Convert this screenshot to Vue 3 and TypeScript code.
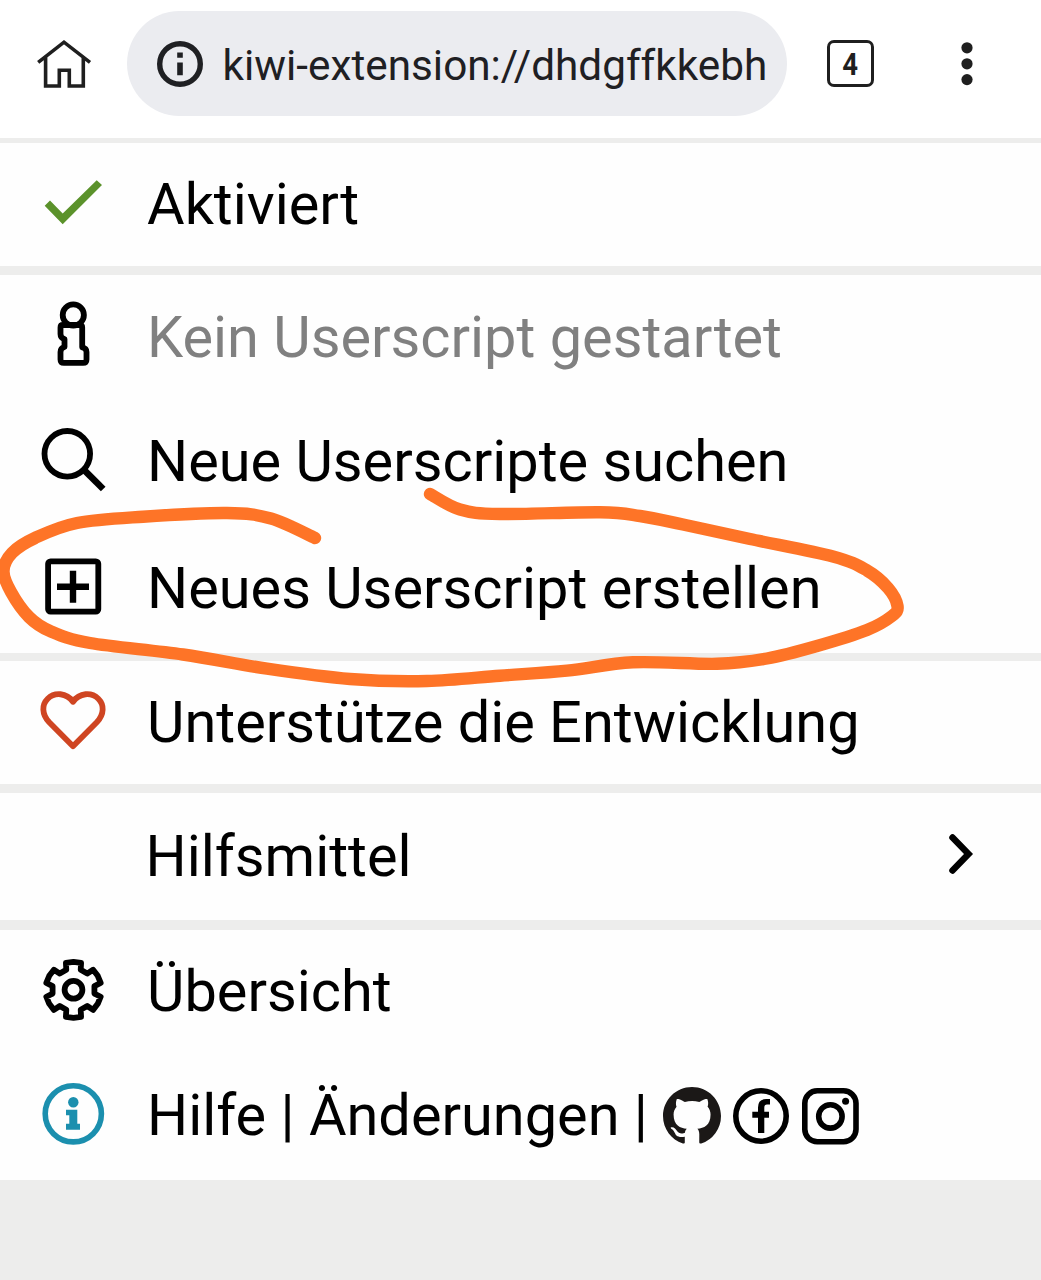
<script setup lang="ts">
type Point = [number, number]

// Freehand marker line, as sampled points in page coordinates
const marker: Point[] = [
  [315, 538], [271, 518.5], [227, 513], [143, 516.7], [77, 523], [35, 538], [12, 553],
  [3.5, 571], [11, 592], [29, 617], [50, 631], [90, 643], [183, 654.5], [267, 668.7],
  [350, 679], [427, 681], [500, 675.7], [567, 670.7], [633, 662.3], [717, 663.8],
  [767, 658.5], [817, 646], [867, 630], [892, 616], [897.5, 606], [888, 588], [867, 570.5],
  [833, 556.5], [750, 539], [683, 524.5], [640, 516], [600, 512.3], [500, 514],
  [460, 509.5], [430, 494],
]

function smooth(points: Point[]): string {
  let d = `M${points[0][0]} ${points[0][1]}`
  for (let i = 0; i < points.length - 1; i++) {
    const a = points[Math.max(i - 1, 0)]
    const b = points[i]
    const c = points[i + 1]
    const e = points[Math.min(i + 2, points.length - 1)]
    d += `C${b[0] + (c[0] - a[0]) / 6} ${b[1] + (c[1] - a[1]) / 6} ${c[0] - (e[0] - b[0]) / 6} ${c[1] - (e[1] - b[1]) / 6} ${c[0]} ${c[1]}`
  }
  return d
}

// Six-toothed cog around (cx, cy)
function cog(cx: number, cy: number): string {
  const tooth: Point[] = [[-7.2, -20], [-7.6, -27], [0, -28], [7.6, -27], [7.2, -20]]
  const out: string[] = []
  for (let k = 0; k < 6; k++) {
    const t = (k * Math.PI) / 3
    for (const [x, y] of tooth) {
      const px = cx + x * Math.cos(t) - y * Math.sin(t)
      const py = cy + x * Math.sin(t) + y * Math.cos(t)
      out.push(`${px.toFixed(2)} ${py.toFixed(2)}`)
    }
  }
  return `M${out.join('L')}Z`
}

const markerPath = smooth(marker)
const cogPath = cog(32.5, 31.8)
</script>

<template>
  <div class="screen">
    <header class="toolbar">
      <svg class="home" viewBox="0 0 55 48" width="55" height="48">
        <path d="M1.2 22.3 27 2.2 53 22.3M8.6 17V46H22.3V30.2H32.3V46H46.3V17" />
      </svg>
      <div class="address">
        <svg viewBox="0 0 46 46" width="46" height="46">
          <circle cx="23" cy="23" r="20.3" />
          <path d="M20.2 11.5h5.6v5.2h-5.6zM20.2 21.6h5.6v12.6h-5.6z" />
        </svg>
        <span class="url">kiwi-extension://dhdgffkkebh</span>
      </div>
      <div class="tabs"><span>4</span></div>
      <svg class="more" viewBox="0 0 12 44" width="12" height="44">
        <circle cx="6" cy="5.8" r="5.6" /><circle cx="6" cy="21.8" r="5.6" /><circle cx="6" cy="37.6" r="5.6" />
      </svg>
    </header>

    <section class="group first">
      <div class="row">
        <svg class="icon" viewBox="0 0 64 64">
          <path class="check" d="M9 30.5 21.7 43.6 55.7 10.2 61 15 21.7 54.2 3.7 35.7Z" />
        </svg>
        <span class="label">Aktiviert</span>
      </div>
    </section>

    <section class="group scripts">
      <div class="row">
        <svg class="icon line" viewBox="0 0 64 64">
          <circle cx="32.3" cy="12" r="10.6" />
          <path d="M22 22H38.6Q41.2 22 41.2 24.6V44.3Q45.5 45 45.5 49V56.5Q45.5 59.9 42.1 59.9H22.9Q19.5 59.9 19.5 56.5V49Q19.5 45 23.5 44V36Q19.5 35 19.5 31V24.5Q19.5 22 22 22Z" />
        </svg>
        <span class="label muted">Kein Userscript gestartet</span>
      </div>
      <div class="row search">
        <svg class="icon line" viewBox="0 0 64 64">
          <circle cx="26.3" cy="24.8" r="22.8" />
          <path class="handle" d="M43.5 41.3 62.2 60" />
        </svg>
        <span class="label">Neue Userscripte suchen</span>
      </div>
      <div class="row create">
        <svg class="icon line" viewBox="0 0 64 64">
          <rect x="7.1" y="6.3" width="50.2" height="50.4" rx="2.5" />
          <path class="plus" d="M16 31.8H48M32 15.8V47.8" />
        </svg>
        <span class="label">Neues Userscript erstellen</span>
      </div>
    </section>

    <section class="group donate">
      <div class="row">
        <svg class="icon line heart" viewBox="0 0 64 64">
          <path d="M32 58.2 8.2 34.2C.5 26 .8 16.5 6.7 10.7C13.5 4 25.5 4.5 32 13.8C38.5 4.5 50.5 4 57.3 10.7C63.2 16.5 63.5 26 55.8 34.2Z" />
        </svg>
        <span class="label">Unterstütze die Entwicklung</span>
      </div>
    </section>

    <section class="group tools">
      <div class="row">
        <span class="icon"></span>
        <span class="label">Hilfsmittel</span>
        <svg class="chevron" viewBox="0 0 28 44" width="28" height="44">
          <path d="M5.5 5.5 21.5 22 5.5 38.5" />
        </svg>
      </div>
    </section>

    <section class="group last">
      <div class="row overview">
        <svg class="icon line" viewBox="0 0 64 64">
          <path :d="cogPath" />
          <circle cx="32.5" cy="31.8" r="8.9" />
        </svg>
        <span class="label">Übersicht</span>
      </div>
      <div class="row help">
        <svg class="icon info" viewBox="0 0 64 64">
          <circle class="ring" cx="32.3" cy="30.8" r="28.1" />
          <circle cx="32.3" cy="19.2" r="5.2" />
          <path d="M25 26.8H36.3V40.8H39V46.8H25V40.8H28.3V32.2H25Z" />
        </svg>
        <span class="label">Hilfe | Änderungen |</span>
        <span class="social">
          <svg viewBox="0 0 16 16" width="58" height="58">
            <path fill="#1b1817" d="M8 0C3.58 0 0 3.58 0 8c0 3.54 2.29 6.53 5.47 7.59.4.07.55-.17.55-.38 0-.19-.01-.82-.01-1.49-2.01.37-2.53-.49-2.69-.94-.09-.23-.48-.94-.82-1.13-.28-.15-.68-.52-.01-.53.63-.01 1.08.58 1.23.82.72 1.21 1.87.87 2.33.66.07-.52.28-.87.51-1.07-1.78-.2-3.64-.89-3.64-3.95 0-.87.31-1.59.82-2.15-.08-.2-.36-1.02.08-2.12 0 0 .67-.21 2.2.82.64-.18 1.32-.27 2-.27s1.36.09 2 .27c1.53-1.04 2.2-.82 2.2-.82.44 1.1.16 1.92.08 2.12.51.56.82 1.27.82 2.15 0 3.07-1.87 3.75-3.65 3.95.29.25.54.73.54 1.48 0 1.07-.01 1.93-.01 2.2 0 .21.15.46.55.38A8.01 8.01 0 0 0 16 8c0-4.42-3.58-8-8-8z" />
          </svg>
          <svg viewBox="0 0 56 56" width="56" height="56">
            <circle cx="28" cy="28" r="25.2" fill="none" stroke="#000" stroke-width="5.6" />
            <path d="M25 45V29.7H19.3V23.7H25V19.5Q25 11 33.2 11H37V16.5H34Q31.3 16.5 31.3 19.5V23.7H36V29.7H31.3V45Z" />
          </svg>
          <svg class="camera" viewBox="0 0 57 57" width="57" height="57">
            <rect x="2.8" y="2.8" width="51.2" height="51" rx="12.5" fill="none" stroke="#000" stroke-width="5.6" />
            <circle cx="28.4" cy="28.4" r="11.7" fill="none" stroke="#000" stroke-width="5.6" />
            <circle cx="43.6" cy="13.2" r="3.5" />
          </svg>
        </span>
      </div>
    </section>

    <svg class="marker" viewBox="0 0 1041 1280" width="1041" height="1280">
      <path :d="markerPath" />
    </svg>
  </div>
</template>

<style>
body {
  margin: 0;
  background: #ededec;
}
</style>

<style scoped>
.screen {
  position: relative;
  width: 1041px;
  height: 1280px;
  overflow: hidden;
  background: #ededec;
  font-family: Roboto, "Liberation Sans", sans-serif;
  color: #000;
}
svg {
  display: block;
  flex: none;
  overflow: visible;
}
.toolbar {
  display: flex;
  align-items: center;
  box-sizing: border-box;
  height: 138px;
  padding: 0 0 11px 37px;
  background: #fff;
}
.home {
  fill: none;
  stroke: #1f1f1f;
  stroke-width: 3.6;
}
.address {
  display: flex;
  align-items: center;
  box-sizing: border-box;
  width: 660px;
  height: 105px;
  margin-left: 35px;
  padding-left: 30px;
  border-radius: 53px;
  background: #ebecf0;
}
.address circle {
  fill: none;
  stroke: #1f2023;
  stroke-width: 5.4;
}
.address path {
  fill: #1f2023;
}
.url {
  margin: 5px 0 0 19.5px;
  font-size: 42.3px;
  line-height: 50px;
  white-space: nowrap;
  color: #1f2023;
}
.tabs {
  display: flex;
  align-items: center;
  justify-content: center;
  box-sizing: border-box;
  width: 47px;
  height: 47px;
  margin-left: 40px;
  border: 3.5px solid #1f1f1f;
  border-radius: 7px;
  color: #1f1f1f;
  font-size: 32px;
  font-weight: 700;
  line-height: 40px;
}
.tabs span {
  transform: scaleX(0.86);
}
.more {
  margin-left: 87px;
  fill: #1f1f1f;
}
.group {
  background: #fefefe;
}
.row {
  display: flex;
  align-items: center;
  box-sizing: border-box;
  padding-left: 41px;
}
.first {
  margin-top: 5px;
}
.first .row,
.donate .row {
  height: 123px;
}
.scripts {
  margin-top: 9px;
}
.scripts .row {
  height: 126px;
}
.scripts .search {
  height: 125px;
}
.scripts .create {
  height: 127px;
}
.donate {
  margin-top: 8px;
}
.tools {
  margin-top: 9px;
}
.tools .row {
  height: 127px;
}
.last {
  margin-top: 10px;
}
.last .row {
  height: 125px;
}
.icon {
  flex: none;
  width: 64px;
  height: 64px;
  margin-bottom: 6px;
}
.line {
  fill: none;
  stroke: #000;
  stroke-width: 5.8;
  stroke-linejoin: round;
}
.line .handle {
  stroke-width: 6.6;
}
.line .plus {
  stroke-width: 6.4;
}
.check {
  fill: #5b922b;
}
.heart {
  stroke: #cf4522;
}
.info {
  fill: #1b8fae;
}
.info .ring {
  fill: none;
  stroke: #1b8fae;
  stroke-width: 5.6;
}
.label {
  margin: 0 0 2px 42px;
  font-size: 57.7px;
  line-height: 66px;
  white-space: nowrap;
}
.create .label,
.overview .label {
  margin-bottom: 4px;
}
.search .label,
.help .label {
  margin-bottom: 5px;
}
.tools .label {
  margin-left: 40.5px;
}
.muted {
  color: #808080;
}
.chevron {
  margin: 0 66px 5px auto;
  fill: none;
  stroke: #000;
  stroke-width: 6.5;
  stroke-linecap: round;
}
.social {
  display: flex;
  align-items: center;
  gap: 12px;
  margin: 0 0 3px auto;
  padding-right: 182px;
}
.camera {
  margin-left: 1px;
}
.marker {
  position: absolute;
  inset: 0;
  pointer-events: none;
  fill: none;
  stroke: #fe7427;
  stroke-width: 12.4;
  stroke-linecap: round;
  stroke-linejoin: round;
}
</style>
